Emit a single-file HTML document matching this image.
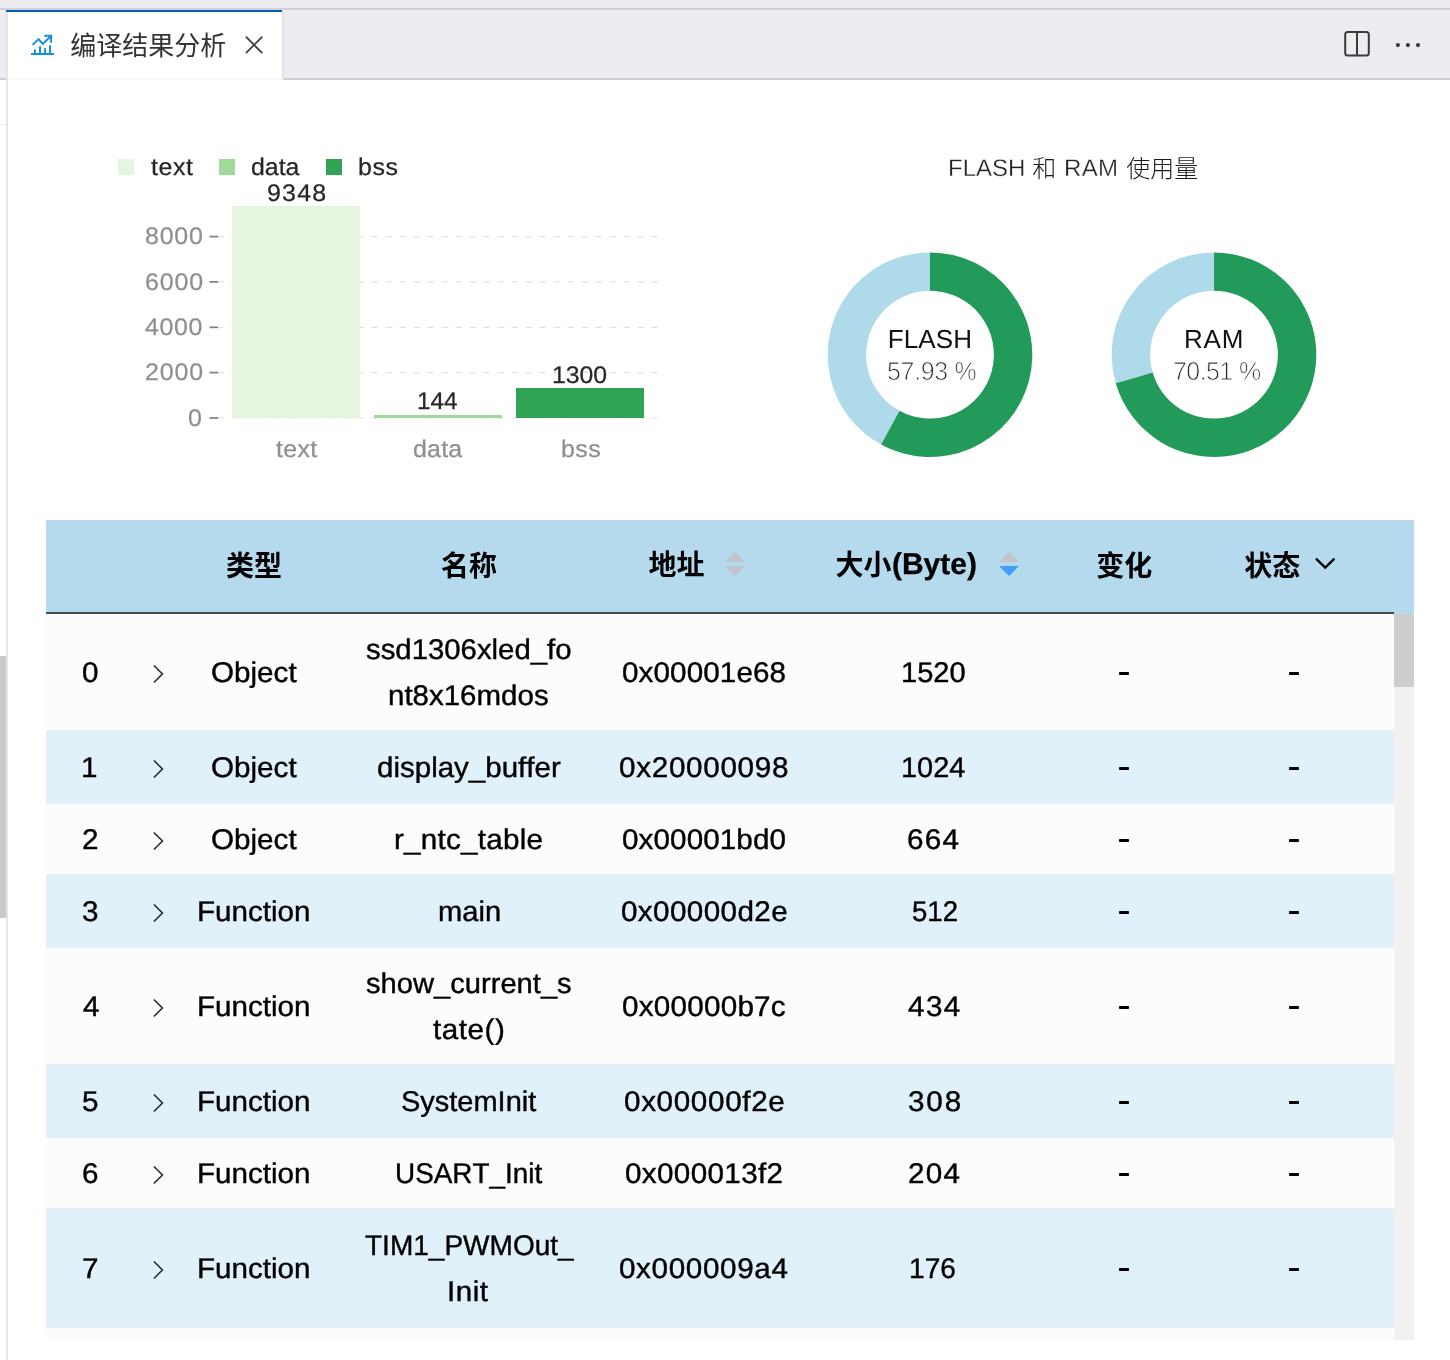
<!DOCTYPE html>
<html lang="zh"><head><meta charset="utf-8"><title>compile analysis</title>
<style>
html,body{margin:0;padding:0;background:#fff;}
body{width:1450px;height:1360px;position:relative;overflow:hidden;font-family:"Liberation Sans",sans-serif;font-kerning:none;}
.r{position:absolute;display:block;}
.t{position:absolute;transform-origin:0 0;white-space:pre;line-height:40px;height:40px;text-rendering:geometricPrecision;}
#all{position:absolute;left:0;top:0;width:1450px;height:1360px;will-change:transform;}
</style></head><body><div id="all">
<div class="r" style="left:0px;top:0px;width:1450px;height:80px;background:#ececf1;"></div>
<div class="r" style="left:0px;top:8px;width:1450px;height:2px;background:#d0d0d3;"></div>
<div class="r" style="left:0px;top:78px;width:1450px;height:2px;background:#cfcfd2;"></div>
<div class="r" style="left:6px;top:10px;width:278px;height:70px;background:#e4e4e7;"></div>
<div class="r" style="left:8px;top:10px;width:274px;height:70px;background:#fff;"></div>
<div class="r" style="left:8px;top:78px;width:274px;height:2px;background:#f8f8f8;"></div>
<div class="r" style="left:6px;top:10px;width:276px;height:2px;background:#005fb8;"></div>
<div class="r" style="left:6px;top:80px;width:2px;height:1280px;background:#e5e5e5;"></div>
<div class="r" style="left:0px;top:124px;width:6px;height:1px;background:#ededed;"></div>
<div class="r" style="left:0px;top:656px;width:6px;height:262px;background:#c9c9c9;"></div>
<svg class="r" style="left:28px;top:32px" width="30" height="26" viewBox="0 0 30 26"><g fill="none" stroke="#1a8fd9" stroke-width="2"><path d="M3 22H26" /><path d="M7 17.5V21M12 14.2V21M17 16.2V21M22 13.2V21"/><path d="M4.6 12.9L10.6 7.1L14.7 11.8L22.6 4.6"/><path d="M16.2 3.8H23.1V10.7"/></g></svg>
<svg class="r" role="img" aria-label="编译结果分析" style="left:0;top:0;overflow:visible" width="1" height="1"><text x="70.2" y="55.18" font-size="26" fill="#333" font-family="'Liberation Sans','Noto Sans CJK SC',sans-serif">编译结果分析</text></svg>
<svg class="r" style="left:240px;top:30px" width="28" height="28" viewBox="0 0 28 28"><path d="M5.9 6.7L22.3 23.1M22.3 6.7L5.9 23.1" stroke="#424242" stroke-width="1.9" fill="none"/></svg>
<svg class="r" style="left:1340px;top:28px" width="34" height="32" viewBox="0 0 34 32"><g fill="none" stroke="#3b3b3b" stroke-width="2"><rect x="5.2" y="4" width="23.6" height="23.6" rx="2.5"/><path d="M17 4V27.6"/></g></svg>
<svg class="r" style="left:1390px;top:36px" width="36" height="18" viewBox="0 0 36 18"><g fill="#3b3b3b"><circle cx="7.9" cy="9.1" r="2.1"/><circle cx="17.9" cy="9.1" r="2.1"/><circle cx="28" cy="9.1" r="2.1"/></g></svg>
<div class="r" style="left:118px;top:159px;width:16px;height:16px;background:#e5f5e0;"></div>
<div class="r" style="left:218.5px;top:159px;width:16px;height:16px;background:#a1d99b;"></div>
<div class="r" style="left:326px;top:159px;width:16px;height:16px;background:#31a354;"></div>
<div class="t " style="left:150.82px;top:148px;font-size:24px;letter-spacing:0.586px;color:#262626;-webkit-text-stroke:0.25px #262626;transform:scaleX(1.0400);">text</div>
<div class="t " style="left:251.25px;top:148px;font-size:24px;letter-spacing:0.000px;color:#262626;-webkit-text-stroke:0.25px #262626;transform:scaleX(1.0371);">data</div>
<div class="t " style="left:357.69px;top:148px;font-size:24px;letter-spacing:0.562px;color:#262626;-webkit-text-stroke:0.25px #262626;transform:scaleX(1.0400);">bss</div>
<svg class="r" style="left:0px;top:0px" width="700" height="500" viewBox="0 0 700 500"><path d="M217.4 236.6H658" stroke="#e2e2e2" stroke-width="1.2" stroke-dasharray="6.5 7.5" fill="none"/><path d="M209.5 236.6H218" stroke="#858585" stroke-width="1.8" fill="none"/><path d="M217.4 281.9H658" stroke="#e2e2e2" stroke-width="1.2" stroke-dasharray="6.5 7.5" fill="none"/><path d="M209.5 281.9H218" stroke="#858585" stroke-width="1.8" fill="none"/><path d="M217.4 327.3H658" stroke="#e2e2e2" stroke-width="1.2" stroke-dasharray="6.5 7.5" fill="none"/><path d="M209.5 327.3H218" stroke="#858585" stroke-width="1.8" fill="none"/><path d="M217.4 372.6H658" stroke="#e2e2e2" stroke-width="1.2" stroke-dasharray="6.5 7.5" fill="none"/><path d="M209.5 372.6H218" stroke="#858585" stroke-width="1.8" fill="none"/><path d="M217.4 418H658" stroke="#e2e2e2" stroke-width="1.2" stroke-dasharray="6.5 7.5" fill="none"/><path d="M209.5 418H218" stroke="#858585" stroke-width="1.8" fill="none"/></svg>
<div class="t " style="left:144.72px;top:217px;font-size:24px;letter-spacing:0.748px;color:#8f8f8f;-webkit-text-stroke:0.25px #8f8f8f;transform:scaleX(1.0400);">8000</div>
<div class="t " style="left:144.53px;top:263px;font-size:24px;letter-spacing:0.806px;color:#8f8f8f;-webkit-text-stroke:0.25px #8f8f8f;transform:scaleX(1.0400);">6000</div>
<div class="t " style="left:145.23px;top:308px;font-size:24px;letter-spacing:0.584px;color:#8f8f8f;-webkit-text-stroke:0.25px #8f8f8f;transform:scaleX(1.0400);">4000</div>
<div class="t " style="left:144.54px;top:353px;font-size:24px;letter-spacing:0.803px;color:#8f8f8f;-webkit-text-stroke:0.25px #8f8f8f;transform:scaleX(1.0400);">2000</div>
<div class="t " style="left:188.03px;top:399px;font-size:24px;letter-spacing:0.000px;color:#8f8f8f;-webkit-text-stroke:0.25px #8f8f8f;transform:scaleX(1.0400);">0</div>
<div class="r" style="left:232px;top:206px;width:128px;height:212px;background:#e5f5e0;"></div>
<div class="r" style="left:374px;top:414.7px;width:128px;height:3.3px;background:#a1d99b;"></div>
<div class="r" style="left:516px;top:388px;width:128px;height:30px;background:#31a354;"></div>
<div class="t " style="left:267.03px;top:174px;font-size:24px;letter-spacing:1.163px;color:#262626;-webkit-text-stroke:0.25px #262626;transform:scaleX(1.0400);">9348</div>
<div class="t " style="left:417.25px;top:382px;font-size:24px;letter-spacing:0.000px;color:#262626;-webkit-text-stroke:0.25px #262626;transform:scaleX(1.0130);">144</div>
<div class="t " style="left:552.31px;top:356px;font-size:24px;letter-spacing:0.000px;color:#262626;-webkit-text-stroke:0.25px #262626;transform:scaleX(1.0331);">1300</div>
<div class="t " style="left:275.92px;top:430px;font-size:24px;letter-spacing:0.330px;color:#8f8f8f;-webkit-text-stroke:0.25px #8f8f8f;transform:scaleX(1.0400);">text</div>
<div class="t " style="left:413.45px;top:430px;font-size:24px;letter-spacing:0.182px;color:#8f8f8f;-webkit-text-stroke:0.25px #8f8f8f;transform:scaleX(1.0400);">data</div>
<div class="t " style="left:560.79px;top:430px;font-size:24px;letter-spacing:0.370px;color:#8f8f8f;-webkit-text-stroke:0.25px #8f8f8f;transform:scaleX(1.0400);">bss</div>
<svg class="r" style="left:0px;top:0px" width="1450" height="500" viewBox="0 0 1450 500"><path d="M881.11 444.56A102.3 102.3 0 0 1 930 252.39999999999998L930 290.8A63.9 63.9 0 0 0 899.46 410.83Z" fill="#afdaea"/><path d="M930 252.39999999999998A102.3 102.3 0 1 1 881.11 444.56L899.46 410.83A63.9 63.9 0 1 0 930 290.8Z" fill="#229a59"/><path d="M1115.74 383.18A102.3 102.3 0 0 1 1214 252.39999999999998L1214 290.8A63.9 63.9 0 0 0 1152.63 372.49Z" fill="#afdaea"/><path d="M1214 252.39999999999998A102.3 102.3 0 1 1 1115.74 383.18L1152.63 372.49A63.9 63.9 0 1 0 1214 290.8Z" fill="#229a59"/></svg>
<div class="t " style="left:887.77px;top:319px;font-size:26px;letter-spacing:0.113px;color:#111;">FLASH</div>
<div class="t " style="left:1183.97px;top:319px;font-size:26px;letter-spacing:0.845px;color:#111;">RAM</div>
<div class="t " style="left:887.20px;top:351px;font-size:26px;letter-spacing:-0.330px;color:#2a2a2a;-webkit-text-stroke:0.8px #fff;transform:scaleX(0.9600);">57.93 %</div>
<div class="t " style="left:1172.52px;top:351px;font-size:26px;letter-spacing:-0.576px;color:#2a2a2a;-webkit-text-stroke:0.8px #fff;transform:scaleX(0.9600);">70.51 %</div>
<div class="t " style="left:947.73px;top:149px;font-size:24px;letter-spacing:0.000px;color:#222;-webkit-text-stroke:0.3px #fff;transform:scaleX(0.9982);">FLASH</div>
<div class="t " style="left:1064.03px;top:149px;font-size:24px;letter-spacing:0.303px;color:#222;-webkit-text-stroke:0.3px #fff;">RAM</div>
<svg class="r" role="img" aria-label="和" style="left:0;top:0;overflow:visible" width="1" height="1"><text x="1032.2" y="176.52" font-size="24" fill="#1a1a1a" font-weight="300" font-family="'Liberation Sans','Noto Sans CJK SC',sans-serif">和</text></svg>
<svg class="r" role="img" aria-label="使用量" style="left:0;top:0;overflow:visible" width="1" height="1"><text x="1126.2" y="176.52" font-size="24" fill="#1a1a1a" font-weight="300" font-family="'Liberation Sans','Noto Sans CJK SC',sans-serif">使用量</text></svg>
<div class="r" style="left:46px;top:520px;width:1368px;height:94px;background:#b5d9ed;"></div>
<div class="r" style="left:46px;top:612px;width:1348px;height:2px;background:#4d494f;"></div>
<div class="r" style="left:1394px;top:614px;width:20px;height:726px;background:#f1f1f1;"></div>
<div class="r" style="left:1394px;top:614px;width:20px;height:73px;background:#cdcdcd;"></div>
<div class="r" style="left:46px;top:614px;width:1348px;height:118px;background:#fcfcfc;"></div>
<div class="r" style="left:46px;top:730px;width:1348px;height:2px;background:#ebeef5;"></div>
<div class="r" style="left:46px;top:732px;width:1348px;height:72px;background:#e1f1f9;"></div>
<div class="r" style="left:46px;top:802px;width:1348px;height:2px;background:#e6eef7;"></div>
<div class="r" style="left:46px;top:804px;width:1348px;height:72px;background:#fcfcfc;"></div>
<div class="r" style="left:46px;top:874px;width:1348px;height:2px;background:#ebeef5;"></div>
<div class="r" style="left:46px;top:876px;width:1348px;height:72px;background:#e1f1f9;"></div>
<div class="r" style="left:46px;top:946px;width:1348px;height:2px;background:#e6eef7;"></div>
<div class="r" style="left:46px;top:948px;width:1348px;height:118px;background:#fcfcfc;"></div>
<div class="r" style="left:46px;top:1064px;width:1348px;height:2px;background:#ebeef5;"></div>
<div class="r" style="left:46px;top:1066px;width:1348px;height:72px;background:#e1f1f9;"></div>
<div class="r" style="left:46px;top:1136px;width:1348px;height:2px;background:#e6eef7;"></div>
<div class="r" style="left:46px;top:1138px;width:1348px;height:72px;background:#fcfcfc;"></div>
<div class="r" style="left:46px;top:1208px;width:1348px;height:2px;background:#ebeef5;"></div>
<div class="r" style="left:46px;top:1210px;width:1348px;height:118px;background:#e1f1f9;"></div>
<div class="r" style="left:46px;top:1326px;width:1348px;height:2px;background:#e6eef7;"></div>
<div class="r" style="left:46px;top:1328px;width:1348px;height:12px;background:#fcfcfc;"></div>
<svg class="r" role="img" aria-label="类型" style="left:0;top:0;overflow:visible" width="1" height="1"><text x="225.9" y="576.24" font-size="28" font-weight="bold" fill="#000" font-family="'Liberation Sans','Noto Sans CJK SC',sans-serif">类型</text></svg>
<svg class="r" role="img" aria-label="名称" style="left:0;top:0;overflow:visible" width="1" height="1"><text x="441" y="576.24" font-size="28" font-weight="bold" fill="#000" font-family="'Liberation Sans','Noto Sans CJK SC',sans-serif">名称</text></svg>
<svg class="r" role="img" aria-label="地址" style="left:0;top:0;overflow:visible" width="1" height="1"><text x="648.5" y="574.54" font-size="28" font-weight="bold" fill="#000" font-family="'Liberation Sans','Noto Sans CJK SC',sans-serif">地址</text></svg>
<svg class="r" role="img" aria-label="大小" style="left:0;top:0;overflow:visible" width="1" height="1"><text x="835.5" y="574.54" font-size="28" font-weight="bold" fill="#000" font-family="'Liberation Sans','Noto Sans CJK SC',sans-serif">大小</text></svg>
<div class="t " style="left:891.81px;top:545px;font-size:30px;letter-spacing:0.000px;color:#000;font-weight:bold;-webkit-text-stroke:0.3px #000;transform:scaleX(0.9986);">(Byte)</div>
<svg class="r" role="img" aria-label="变化" style="left:0;top:0;overflow:visible" width="1" height="1"><text x="1096.2" y="576.24" font-size="28" font-weight="bold" fill="#000" font-family="'Liberation Sans','Noto Sans CJK SC',sans-serif">变化</text></svg>
<svg class="r" role="img" aria-label="状态" style="left:0;top:0;overflow:visible" width="1" height="1"><text x="1244.2" y="576.24" font-size="28" font-weight="bold" fill="#000" font-family="'Liberation Sans','Noto Sans CJK SC',sans-serif">状态</text></svg>
<svg class="r" style="left:0px;top:0px" width="1450" height="620" viewBox="0 0 1450 620"><path d="M735 552L745 562H725Z" fill="#c0c4cc"/><path d="M725 566H745L735 576Z" fill="#c0c4cc"/><path d="M1009 552L1019 562H999Z" fill="#c0c4cc"/><path d="M999 566H1019L1009 576Z" fill="#409eff"/><path d="M1316 558.6L1325.2 567.6L1334.4 558.6" fill="none" stroke="#000" stroke-width="2.4" stroke-linejoin="miter"/></svg>
<div class="t " style="left:82.14px;top:653px;font-size:28.5px;letter-spacing:0.000px;color:#000;-webkit-text-stroke:0.4px #000;transform:scaleX(1.0400);">0</div>
<div class="t " style="left:210.70px;top:653px;font-size:28.5px;letter-spacing:0.000px;color:#000;-webkit-text-stroke:0.4px #000;transform:scaleX(1.0395);">Object</div>
<div class="t " style="left:366.48px;top:630px;font-size:28.5px;letter-spacing:0.000px;color:#000;-webkit-text-stroke:0.4px #000;transform:scaleX(1.0295);">ssd1306xled_fo</div>
<div class="t " style="left:388.34px;top:676px;font-size:28.5px;letter-spacing:0.000px;color:#000;-webkit-text-stroke:0.4px #000;transform:scaleX(1.0345);">nt8x16mdos</div>
<div class="t " style="left:621.94px;top:653px;font-size:28.5px;letter-spacing:0.093px;color:#000;-webkit-text-stroke:0.4px #000;transform:scaleX(1.0400);">0x00001e68</div>
<div class="t " style="left:900.99px;top:653px;font-size:28.5px;letter-spacing:0.000px;color:#000;-webkit-text-stroke:0.4px #000;transform:scaleX(1.0197);">1520</div>
<div class="r" style="left:1119px;top:672.3px;width:10.4px;height:2.8px;background:#000;border-radius:0.7px"></div>
<div class="r" style="left:1289px;top:672.3px;width:10.4px;height:2.8px;background:#000;border-radius:0.7px"></div>
<div class="t " style="left:81.04px;top:748px;font-size:28.5px;letter-spacing:0.000px;color:#000;-webkit-text-stroke:0.4px #000;transform:scaleX(1.0400);">1</div>
<div class="t " style="left:210.70px;top:748px;font-size:28.5px;letter-spacing:0.000px;color:#000;-webkit-text-stroke:0.4px #000;transform:scaleX(1.0395);">Object</div>
<div class="t " style="left:376.86px;top:748px;font-size:28.5px;letter-spacing:0.000px;color:#000;-webkit-text-stroke:0.4px #000;transform:scaleX(1.0354);">display_buffer</div>
<div class="t " style="left:619.14px;top:748px;font-size:28.5px;letter-spacing:0.670px;color:#000;-webkit-text-stroke:0.4px #000;transform:scaleX(1.0400);">0x20000098</div>
<div class="t " style="left:901.00px;top:748px;font-size:28.5px;letter-spacing:-0.000px;color:#000;-webkit-text-stroke:0.4px #000;transform:scaleX(1.0150);">1024</div>
<div class="r" style="left:1119px;top:767.3px;width:10.4px;height:2.8px;background:#000;border-radius:0.7px"></div>
<div class="r" style="left:1289px;top:767.3px;width:10.4px;height:2.8px;background:#000;border-radius:0.7px"></div>
<div class="t " style="left:81.81px;top:820px;font-size:28.5px;letter-spacing:0.000px;color:#000;-webkit-text-stroke:0.4px #000;transform:scaleX(1.0400);">2</div>
<div class="t " style="left:210.70px;top:820px;font-size:28.5px;letter-spacing:0.000px;color:#000;-webkit-text-stroke:0.4px #000;transform:scaleX(1.0395);">Object</div>
<div class="t " style="left:394.03px;top:820px;font-size:28.5px;letter-spacing:0.234px;color:#000;-webkit-text-stroke:0.4px #000;transform:scaleX(1.0400);">r_ntc_table</div>
<div class="t " style="left:622.04px;top:820px;font-size:28.5px;letter-spacing:0.089px;color:#000;-webkit-text-stroke:0.4px #000;transform:scaleX(1.0400);">0x00001bd0</div>
<div class="t " style="left:907.49px;top:820px;font-size:28.5px;letter-spacing:1.260px;color:#000;-webkit-text-stroke:0.4px #000;transform:scaleX(1.0400);">664</div>
<div class="r" style="left:1119px;top:839.3px;width:10.4px;height:2.8px;background:#000;border-radius:0.7px"></div>
<div class="r" style="left:1289px;top:839.3px;width:10.4px;height:2.8px;background:#000;border-radius:0.7px"></div>
<div class="t " style="left:82.17px;top:892px;font-size:28.5px;letter-spacing:0.000px;color:#000;-webkit-text-stroke:0.4px #000;transform:scaleX(1.0400);">3</div>
<div class="t " style="left:197.27px;top:892px;font-size:28.5px;letter-spacing:0.000px;color:#000;-webkit-text-stroke:0.4px #000;transform:scaleX(1.0378);">Function</div>
<div class="t " style="left:437.57px;top:892px;font-size:28.5px;letter-spacing:-0.000px;color:#000;-webkit-text-stroke:0.4px #000;transform:scaleX(1.0219);">main</div>
<div class="t " style="left:620.54px;top:892px;font-size:28.5px;letter-spacing:0.373px;color:#000;-webkit-text-stroke:0.4px #000;transform:scaleX(1.0400);">0x00000d2e</div>
<div class="t " style="left:911.70px;top:892px;font-size:28.5px;letter-spacing:0.000px;color:#000;-webkit-text-stroke:0.4px #000;transform:scaleX(0.9672);">512</div>
<div class="r" style="left:1119px;top:911.3px;width:10.4px;height:2.8px;background:#000;border-radius:0.7px"></div>
<div class="r" style="left:1289px;top:911.3px;width:10.4px;height:2.8px;background:#000;border-radius:0.7px"></div>
<div class="t " style="left:82.62px;top:987px;font-size:28.5px;letter-spacing:0.000px;color:#000;-webkit-text-stroke:0.4px #000;transform:scaleX(1.0400);">4</div>
<div class="t " style="left:197.27px;top:987px;font-size:28.5px;letter-spacing:0.000px;color:#000;-webkit-text-stroke:0.4px #000;transform:scaleX(1.0378);">Function</div>
<div class="t " style="left:366.19px;top:964px;font-size:28.5px;letter-spacing:0.000px;color:#000;-webkit-text-stroke:0.4px #000;transform:scaleX(1.0223);">show_current_s</div>
<div class="t " style="left:433.25px;top:1010px;font-size:28.5px;letter-spacing:0.501px;color:#000;-webkit-text-stroke:0.4px #000;transform:scaleX(1.0400);">tate()</div>
<div class="t " style="left:622.04px;top:987px;font-size:28.5px;letter-spacing:0.227px;color:#000;-webkit-text-stroke:0.4px #000;transform:scaleX(1.0400);">0x00000b7c</div>
<div class="t " style="left:908.32px;top:987px;font-size:28.5px;letter-spacing:1.344px;color:#000;-webkit-text-stroke:0.4px #000;transform:scaleX(1.0400);">434</div>
<div class="r" style="left:1119px;top:1006.3px;width:10.4px;height:2.8px;background:#000;border-radius:0.7px"></div>
<div class="r" style="left:1289px;top:1006.3px;width:10.4px;height:2.8px;background:#000;border-radius:0.7px"></div>
<div class="t " style="left:82.11px;top:1082px;font-size:28.5px;letter-spacing:0.000px;color:#000;-webkit-text-stroke:0.4px #000;transform:scaleX(1.0400);">5</div>
<div class="t " style="left:197.27px;top:1082px;font-size:28.5px;letter-spacing:0.000px;color:#000;-webkit-text-stroke:0.4px #000;transform:scaleX(1.0378);">Function</div>
<div class="t " style="left:400.98px;top:1082px;font-size:28.5px;letter-spacing:0.000px;color:#000;-webkit-text-stroke:0.4px #000;transform:scaleX(1.0165);">SystemInit</div>
<div class="t " style="left:623.94px;top:1082px;font-size:28.5px;letter-spacing:0.624px;color:#000;-webkit-text-stroke:0.4px #000;transform:scaleX(1.0400);">0x00000f2e</div>
<div class="t " style="left:907.87px;top:1082px;font-size:28.5px;letter-spacing:1.761px;color:#000;-webkit-text-stroke:0.4px #000;transform:scaleX(1.0400);">308</div>
<div class="r" style="left:1119px;top:1101.3px;width:10.4px;height:2.8px;background:#000;border-radius:0.7px"></div>
<div class="r" style="left:1289px;top:1101.3px;width:10.4px;height:2.8px;background:#000;border-radius:0.7px"></div>
<div class="t " style="left:81.79px;top:1154px;font-size:28.5px;letter-spacing:0.000px;color:#000;-webkit-text-stroke:0.4px #000;transform:scaleX(1.0400);">6</div>
<div class="t " style="left:197.27px;top:1154px;font-size:28.5px;letter-spacing:0.000px;color:#000;-webkit-text-stroke:0.4px #000;transform:scaleX(1.0378);">Function</div>
<div class="t " style="left:394.85px;top:1154px;font-size:28.5px;letter-spacing:0.000px;color:#000;-webkit-text-stroke:0.4px #000;transform:scaleX(0.9780);">USART_Init</div>
<div class="t " style="left:625.44px;top:1154px;font-size:28.5px;letter-spacing:0.333px;color:#000;-webkit-text-stroke:0.4px #000;transform:scaleX(1.0400);">0x000013f2</div>
<div class="t " style="left:907.51px;top:1154px;font-size:28.5px;letter-spacing:1.253px;color:#000;-webkit-text-stroke:0.4px #000;transform:scaleX(1.0400);">204</div>
<div class="r" style="left:1119px;top:1173.3px;width:10.4px;height:2.8px;background:#000;border-radius:0.7px"></div>
<div class="r" style="left:1289px;top:1173.3px;width:10.4px;height:2.8px;background:#000;border-radius:0.7px"></div>
<div class="t " style="left:81.78px;top:1249px;font-size:28.5px;letter-spacing:0.000px;color:#000;-webkit-text-stroke:0.4px #000;transform:scaleX(1.0400);">7</div>
<div class="t " style="left:197.27px;top:1249px;font-size:28.5px;letter-spacing:0.000px;color:#000;-webkit-text-stroke:0.4px #000;transform:scaleX(1.0378);">Function</div>
<div class="t " style="left:364.67px;top:1226px;font-size:28.5px;letter-spacing:0.000px;color:#000;-webkit-text-stroke:0.4px #000;transform:scaleX(0.9831);">TIM1_PWMOut_</div>
<div class="t " style="left:446.66px;top:1272px;font-size:28.5px;letter-spacing:0.453px;color:#000;-webkit-text-stroke:0.4px #000;transform:scaleX(1.0400);">Init</div>
<div class="t " style="left:619.34px;top:1249px;font-size:28.5px;letter-spacing:0.614px;color:#000;-webkit-text-stroke:0.4px #000;transform:scaleX(1.0400);">0x000009a4</div>
<div class="t " style="left:909.36px;top:1249px;font-size:28.5px;letter-spacing:0.000px;color:#000;-webkit-text-stroke:0.4px #000;transform:scaleX(0.9858);">176</div>
<div class="r" style="left:1119px;top:1268.3px;width:10.4px;height:2.8px;background:#000;border-radius:0.7px"></div>
<div class="r" style="left:1289px;top:1268.3px;width:10.4px;height:2.8px;background:#000;border-radius:0.7px"></div>
<svg class="r" style="left:0px;top:0px" width="300" height="1360" viewBox="0 0 300 1360"><path d="M153.9 665.5L162.4 674.0L153.9 682.5" fill="none" stroke="#2a2a2a" stroke-width="1.6"/><path d="M153.9 760.5L162.4 769.0L153.9 777.5" fill="none" stroke="#2a2a2a" stroke-width="1.6"/><path d="M153.9 832.5L162.4 841.0L153.9 849.5" fill="none" stroke="#2a2a2a" stroke-width="1.6"/><path d="M153.9 904.5L162.4 913.0L153.9 921.5" fill="none" stroke="#2a2a2a" stroke-width="1.6"/><path d="M153.9 999.5L162.4 1008.0L153.9 1016.5" fill="none" stroke="#2a2a2a" stroke-width="1.6"/><path d="M153.9 1094.5L162.4 1103.0L153.9 1111.5" fill="none" stroke="#2a2a2a" stroke-width="1.6"/><path d="M153.9 1166.5L162.4 1175.0L153.9 1183.5" fill="none" stroke="#2a2a2a" stroke-width="1.6"/><path d="M153.9 1261.5L162.4 1270.0L153.9 1278.5" fill="none" stroke="#2a2a2a" stroke-width="1.6"/></svg>
</div></body></html>
